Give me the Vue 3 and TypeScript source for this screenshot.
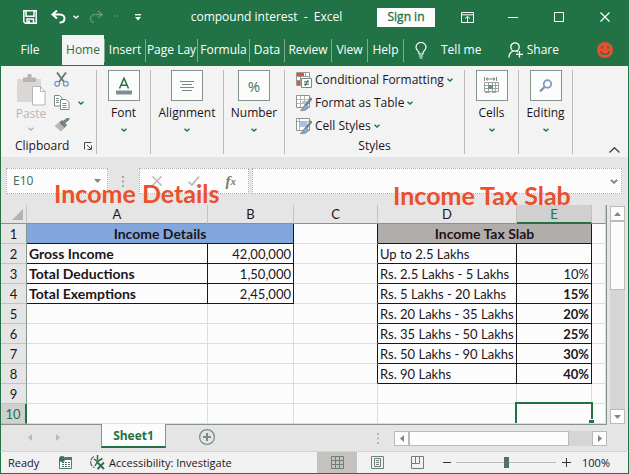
<script setup lang="ts">
import { ref } from 'vue'

interface Row {
  n: number
  label?: string
  amount?: string
  slab?: string
  rate?: string
}

const tabs = [
  { name: 'Insert', cls: 'w-insert' },
  { name: 'Page Lay', cls: 'w-page' },
  { name: 'Formula', cls: 'w-page' },
  { name: 'Data', cls: 'w-data' },
  { name: 'Review', cls: 'w-review' },
  { name: 'View', cls: 'w-view' },
  { name: 'Help', cls: 'w-view' },
]

const columns = ['A', 'B', 'C', 'D', 'E']

const rows: Row[] = [
  { n: 2, label: 'Gross Income', amount: '42,00,000', slab: 'Up to 2.5 Lakhs', rate: '' },
  { n: 3, label: 'Total Deductions', amount: '1,50,000', slab: 'Rs. 2.5 Lakhs - 5 Lakhs', rate: '10%' },
  { n: 4, label: 'Total Exemptions', amount: '2,45,000', slab: 'Rs. 5 Lakhs - 20 Lakhs', rate: '15%' },
  { n: 5, slab: 'Rs. 20 Lakhs - 35 Lakhs', rate: '20%' },
  { n: 6, slab: 'Rs. 35 Lakhs - 50 Lakhs', rate: '25%' },
  { n: 7, slab: 'Rs. 50 Lakhs - 90 Lakhs', rate: '30%' },
  { n: 8, slab: 'Rs. 90 Lakhs', rate: '40%' },
  { n: 9 },
  { n: 10 },
]

const cellName = ref('E10')
const formula = ref('')
const zoom = ref(50)
</script>

<template>
  <div class="window">
    <svg class="defs" aria-hidden="true">
      <symbol id="chev" viewBox="0 0 6 4"><path d="M0.5 0.7 L3 3 L5.5 0.7" fill="none" stroke="currentColor" stroke-width="1.4" /></symbol>
    </svg>

    <header class="titlebar">
      <button class="tb save" aria-label="Save">
        <svg width="14" height="14" viewBox="0 0 14 14"><path d="M0.8 0.8H13.2V13.2H2.2L0.8 11.8Z M3 1V6.2H11V1 M4 13V9H10.5V13" fill="none" stroke="#fff" stroke-width="1.5" /><path d="M5 10.5h2V13H5z" fill="#fff" /></svg>
      </button>
      <button class="tb save" aria-label="Undo">
        <svg width="15" height="14" viewBox="0 0 15 14"><path d="M6 0.5L1.5 4.5L6 8.5 M2 4.5H9C12.5 4.5 13.5 7 13.5 8.5C13.5 11 11.5 12.6 8.5 12.6" fill="none" stroke="#fff" stroke-width="2" /></svg>
      </button>
      <button class="tb tiny" aria-label="Undo list"><svg width="6" height="4"><use href="#chev" /></svg></button>
      <button class="tb redo" aria-label="Redo">
        <svg width="15" height="14" viewBox="0 0 15 14"><path d="M9 1L13 4.5L9 8 M13 4.5H6C3 4.5 1.5 6.5 1.5 8.5C1.5 11 3 12.4 5 12.4" fill="none" stroke="#7fa890" stroke-width="1.4" stroke-dasharray="1.4 0.8" /></svg>
      </button>
      <button class="tb tiny" aria-label="Redo list"><svg width="6" height="4" viewBox="0 0 6 4"><path d="M1 1h1M4 1h1" stroke="#8fb39e" /></svg></button>
      <button class="tb custom" aria-label="Customize toolbar">
        <svg width="6" height="7" viewBox="0 0 6 7"><path d="M0 0.7h6" stroke="#fff" stroke-width="1.3" /><path d="M0 3h6L3 6.5z" fill="#fff" /></svg>
      </button>
      <h1 class="doc">compound interest&nbsp; -&nbsp; Excel</h1>
      <button class="signin">Sign in</button>
      <div class="wincontrols">
        <button class="tb wc" aria-label="Ribbon display options">
          <svg width="13" height="11" viewBox="0 0 13 11"><path d="M0.5 0.5h12v10H0.5z M0.5 2.8h12 M6.5 10V4.5 M4 6.6L6.5 4.3L9 6.6" fill="none" stroke="#fff" /></svg>
        </button>
        <button class="tb wc" aria-label="Minimize"><svg width="10" height="1"><path d="M0 0.5h10" stroke="#fff" /></svg></button>
        <button class="tb wc" aria-label="Maximize"><svg width="10" height="10"><path d="M0.5 0.5h9v9h-9z" fill="none" stroke="#fff" /></svg></button>
        <button class="tb wc" aria-label="Close"><svg width="10" height="10"><path d="M0.5 0.5l9 9M9.5 0.5l-9 9" stroke="#fff" stroke-width="1.2" /></svg></button>
      </div>
    </header>

    <nav class="tabs">
      <button class="tab file">File</button>
      <button class="tab home">Home</button>
      <button v-for="t in tabs" :key="t.name" class="tab sep" :class="t.cls">{{ t.name }}</button>
      <button class="tab tell">
        <svg width="12" height="17" viewBox="0 0 12 17"><path d="M4 12V10.5C3.6 9 1 8 1 5.2A5 4.7 0 0 1 11 5.2C11 8 8.4 9 8 10.5V12z M4 14h4 M4.6 16h2.8" fill="none" stroke="#fff" stroke-width="1.2" /></svg>
        <span>Tell me</span>
      </button>
      <button class="tab share">
        <svg width="15" height="16" viewBox="0 0 15 16"><circle cx="7" cy="5" r="4.2" fill="none" stroke="#fff" stroke-width="1.3" /><path d="M1 15.5C1 12 3 10 5 9M8.5 9L9.8 10M11.5 9v6.6M8 12.3h7" fill="none" stroke="#fff" stroke-width="1.3" /></svg>
        <span>Share</span>
      </button>
      <button class="tab smile" aria-label="Feedback">
        <svg width="16" height="16" viewBox="0 0 16 16"><circle cx="8" cy="8" r="8" fill="#e9502f" /><path d="M5 4v2.6M11 4v2.6" stroke="#217346" stroke-width="1.6" /><path d="M3.5 9.2C5 13.2 11 13.2 12.5 9.2" fill="none" stroke="#217346" stroke-width="1.3" /></svg>
      </button>
    </nav>

    <section class="ribbon">
      <div class="group clipboard">
        <div class="cliprow">
          <button class="paste">
            <svg width="29" height="32" viewBox="0 0 29 32"><path d="M0 5h24v23H0z" fill="#d9d8d7" /><path d="M6 3.5h4.5V1.5a2 2 0 0 1 4 0V3.5H19V8H6z" fill="#b9b4b0" /><path d="M15.5 12.5H23.5L28 17.5V31H15.5z" fill="#fff" stroke="#b9b4b0" /><path d="M23.5 12.5V17.5H28" fill="none" stroke="#b9b4b0" /></svg>
            <span>Paste</span>
            <svg width="6" height="4"><use href="#chev" /></svg>
          </button>
          <div class="cliptools">
            <button class="plain" aria-label="Cut">
              <svg width="15" height="15" viewBox="0 0 15 15"><path d="M3 0.5L10 10M12 0.5L5 10" stroke="#6c7c76" stroke-width="2" /><circle cx="3.2" cy="11.8" r="2.4" fill="none" stroke="#6f98cf" stroke-width="1.3" /><circle cx="11.8" cy="11.8" r="2.4" fill="none" stroke="#6f98cf" stroke-width="1.3" /></svg>
            </button>
            <button class="plain" aria-label="Copy">
              <svg width="16" height="15" viewBox="0 0 16 15"><path d="M0.5 0.5h5l2.5 2.5v8H0.5z" fill="#fff" stroke="#7a8b84" /><path d="M6.5 4.5h5.5l3 3v7H6.5z" fill="#fff" stroke="#7a8b84" /><path d="M2 3.5h3M2 5.5h3M2 7.5h3M8.5 8.5h4M8.5 10.5h4M8.5 12.5h4" stroke="#7a8b84" /></svg>
              <svg class="green" width="6" height="4"><use href="#chev" /></svg>
            </button>
            <button class="plain" aria-label="Format painter">
              <svg width="16" height="14" viewBox="0 0 16 14"><path d="M0.5 8L5 4.5L10.5 10L7 13.5z" fill="#bcb6b2" /><path d="M5 4.5L8 2L13 7L10.5 10z" fill="#70857b" /><path d="M9.5 4.5L14 1" stroke="#70857b" stroke-width="3" stroke-linecap="round" /></svg>
            </button>
          </div>
        </div>
        <div class="grouplabel cliplabel">
          <span>Clipboard</span>
          <button class="plain launcher" aria-label="Clipboard settings"><svg width="8" height="8" viewBox="0 0 8 8"><path d="M0.5 7.5V0.5H7.5M3 3l4 4M7.5 3.5v4h-4" fill="none" stroke="#3d514a" /></svg></button>
        </div>
      </div>

      <div class="group g-font">
        <button class="big">
          <span class="box"><svg width="16" height="18" viewBox="0 0 16 18"><path d="M3.5 11.5L8 1.2L12.5 11.5M5 8.3h6" fill="none" stroke="#217346" stroke-width="1.5" /><path d="M0 13.5h16v4H0z" fill="#7d8f94" /></svg></span>
          <span>Font</span><svg width="6" height="4"><use href="#chev" /></svg>
        </button>
      </div>
      <div class="group g-align">
        <button class="big">
          <span class="box"><svg width="14" height="10" viewBox="0 0 14 10"><path d="M0 0.5h14M2 3.5h10M0 6.5h14M2 9.5h10" stroke="#7a8b84" /></svg></span>
          <span>Alignment</span><svg width="6" height="4"><use href="#chev" /></svg>
        </button>
      </div>
      <div class="group g-number">
        <button class="big">
          <span class="box pct">%</span>
          <span>Number</span><svg width="6" height="4"><use href="#chev" /></svg>
        </button>
      </div>

      <div class="group g-styles">
        <div class="stylelist">
          <button class="styleitem">
            <svg width="16" height="16" viewBox="0 0 16 16"><path d="M0.5 0.5h13v13H0.5z" fill="#fff" stroke="#9a9a9a" /><path d="M1 1h7v3H1zM1 9h3v4H1z" fill="#e9502f" /><path d="M1 4.5h12M1 8.5h5M9.5 1v4M4.5 4v9" stroke="#9a9a9a" /><path d="M5.5 6.5h10v9h-10z" fill="#fff" stroke="#7a8b84" /><path d="M8 9.8h5M8 12.2h5M12 8L9 14" stroke="#35684e" /></svg>
            Conditional Formatting <svg width="6" height="4"><use href="#chev" /></svg>
          </button>
          <button class="styleitem">
            <svg width="16" height="16" viewBox="0 0 16 16"><path d="M0.5 0.5h13v12H0.5z" fill="#fff" stroke="#8b9692" /><path d="M1 4.5h12M1 8.5h12M4.5 1v11M8.5 1v11" stroke="#b9b4b0" /><path d="M6 6h5v3H6z" fill="#a9c3e8" /><path d="M15.5 3L9.5 11" stroke="#718680" stroke-width="2.5" /><path d="M10 9.5L12.5 12C11.5 15 8 16 4.5 15.5C7 14 7 10.5 10 9.5z" fill="#86a6d2" stroke="#73878c" stroke-width="0.8" /></svg>
            Format as Table <svg width="6" height="4"><use href="#chev" /></svg>
          </button>
          <button class="styleitem">
            <svg width="16" height="16" viewBox="0 0 16 16"><path d="M0.5 0.5h13v12H0.5z" fill="#fff" stroke="#8b9692" /><path d="M1 3.5h12M3.5 1v11" stroke="#b9b4b0" /><path d="M4 4h7v5H4z" fill="#a9c3e8" /><path d="M15.5 3L9.5 11" stroke="#718680" stroke-width="2.5" /><path d="M10 9.5L12.5 12C11.5 15 8 16 4.5 15.5C7 14 7 10.5 10 9.5z" fill="#86a6d2" stroke="#73878c" stroke-width="0.8" /></svg>
            Cell Styles <svg width="6" height="4"><use href="#chev" /></svg>
          </button>
        </div>
        <div class="grouplabel">Styles</div>
      </div>

      <div class="group g-font">
        <button class="big">
          <span class="box"><svg width="16" height="17" viewBox="0 0 16 17"><path d="M0.5 0v4M12.5 0v4M2 2h9M4 0.5L2 2l2 1.5M9 0.5L11 2L9 3.5" fill="none" stroke="#7a8b84" /><path d="M0.5 5.5h14v9H0.5zM0.5 8.5h14M0.5 11.5h14M4.5 5.5v9M8.5 5.5v9M11.5 5.5v9M1 15.5h5M8 15.5h4" fill="none" stroke="#9aa39f" /><path d="M4 8h5v4H4z" fill="#748b8a" /></svg></span>
          <span>Cells</span><svg width="6" height="4"><use href="#chev" /></svg>
        </button>
      </div>
      <div class="group g-font">
        <button class="big">
          <span class="box"><svg width="14" height="14" viewBox="0 0 14 14"><circle cx="8.5" cy="5" r="3.8" fill="none" stroke="#7d9abb" stroke-width="1.7" /><path d="M5.5 8L1 12.3" stroke="#7d93aa" stroke-width="2.3" /></svg></span>
          <span>Editing</span><svg width="6" height="4"><use href="#chev" /></svg>
        </button>
      </div>
      <button class="plain collapse" aria-label="Collapse ribbon"><svg width="11" height="6" viewBox="0 0 11 6"><path d="M0.5 5.5L5.5 0.7L10.5 5.5" fill="none" stroke="#2c463a" stroke-width="1.2" /></svg></button>
    </section>

    <section class="formulabar">
      <div class="field namebox">
        <input v-model="cellName" aria-label="Name box" />
        <svg width="7" height="4" viewBox="0 0 7 4"><path d="M0 0h7L3.5 4z" fill="#7a8b84" /></svg>
      </div>
      <svg class="grip" width="2" height="11" viewBox="0 0 2 11"><path d="M0 0h2v2H0zM0 4.5h2v2H0zM0 9h2v2H0z" fill="#aaa5a1" /></svg>
      <div class="field fxbox">
        <button class="plain" aria-label="Cancel"><svg width="10" height="10"><path d="M0.5 0.5l9 9M9.5 0.5l-9 9" stroke="#bcb8b4" stroke-width="1.5" /></svg></button>
        <button class="plain" aria-label="Enter"><svg width="12" height="10" viewBox="0 0 12 10"><path d="M0.5 6L4 9L11 0.5" fill="none" stroke="#bcb8b4" stroke-width="1.7" /></svg></button>
        <button class="plain fx" aria-label="Insert function">f<small>x</small></button>
      </div>
      <div class="field formula">
        <input v-model="formula" aria-label="Formula" />
        <svg width="8" height="5" viewBox="0 0 6 4"><path d="M0.5 0.7L3 3L5.5 0.7" fill="none" stroke="#7a8b84" stroke-width="1.6" /></svg>
      </div>
      <strong class="note left">Income Details</strong>
      <strong class="note right">Income Tax Slab</strong>
    </section>

    <main class="work">
      <div class="sheet">
        <table class="grid">
          <colgroup>
            <col class="c-n" /><col class="c-a" /><col class="c-b" /><col class="c-c" /><col class="c-d" /><col class="c-e" /><col />
          </colgroup>
          <thead>
            <tr>
              <th class="corner"><svg width="11" height="11" viewBox="0 0 11 11"><path d="M11 0V11H0z" fill="#b5b1ae" /></svg></th>
              <th v-for="c in columns" :key="c" scope="col" :class="{ sel: c === 'E' }">{{ c }}</th>
              <th></th>
            </tr>
          </thead>
          <tbody>
            <tr>
              <th scope="row">1</th>
              <td colspan="2" class="k blue">Income Details</td>
              <td class="kr"></td>
              <td colspan="2" class="k tan">Income Tax Slab</td>
              <td></td>
            </tr>
            <tr v-for="r in rows" :key="r.n">
              <th scope="row" :class="{ sel: r.n === 10 }">{{ r.n }}</th>
              <td class="label" :class="{ k: r.label }">{{ r.label }}</td>
              <td class="num" :class="{ k: r.label }">{{ r.amount }}</td>
              <td :class="{ kr: r.slab }"></td>
              <td :class="{ k: r.slab }">{{ r.slab }}</td>
              <td class="num" :class="{ k: r.slab, heavy: r.n > 3, active: r.n === 10 }">{{ r.rate }}<i v-if="r.n === 10" class="cursor"></i></td>
              <td></td>
            </tr>
          </tbody>
        </table>
      </div>
      <div class="vscroll">
        <button class="sb" aria-label="Scroll up"><svg width="7" height="4" viewBox="0 0 7 4"><path d="M0 4h7L3.5 0z" fill="#7a8b84" /></svg></button>
        <div class="vthumb"></div>
        <div class="track"></div>
        <button class="sb" aria-label="Scroll down"><svg width="7" height="4" viewBox="0 0 7 4"><path d="M0 0h7L3.5 4z" fill="#7a8b84" /></svg></button>
      </div>
    </main>

    <section class="sheetbar">
      <div class="arrows">
        <button class="plain" aria-label="Previous sheet"><svg width="4" height="7" viewBox="0 0 4 7"><path d="M4 0v7L0 3.5z" fill="#bcb8b4" /></svg></button>
        <button class="plain" aria-label="Next sheet"><svg width="4" height="7" viewBox="0 0 4 7"><path d="M0 0v7L4 3.5z" fill="#bcb8b4" /></svg></button>
      </div>
      <button class="sheettab">Sheet1</button>
      <button class="plain add" aria-label="New sheet"><svg width="16" height="16" viewBox="0 0 16 16"><circle cx="8" cy="8" r="7.4" fill="none" stroke="#7a8b84" stroke-width="1.2" /><path d="M8 4v8M4 8h8" stroke="#7a8b84" stroke-width="2" /></svg></button>
      <div class="hwrap">
        <svg width="2" height="11" viewBox="0 0 2 11"><path d="M0 0h2v2H0zM0 4.5h2v2H0zM0 9h2v2H0z" fill="#bcb8b4" /></svg>
        <div class="hscroll">
          <button class="sb" aria-label="Scroll left"><svg width="4" height="7" viewBox="0 0 4 7"><path d="M4 0v7L0 3.5z" fill="#7a8b84" /></svg></button>
          <div class="hthumb"></div>
          <div class="track"></div>
          <button class="sb" aria-label="Scroll right"><svg width="4" height="7" viewBox="0 0 4 7"><path d="M0 0v7L4 3.5z" fill="#7a8b84" /></svg></button>
        </div>
      </div>
    </section>

    <footer class="status">
      <span class="ready">Ready</span>
      <svg class="macro" width="13" height="13" viewBox="0 0 13 13"><path d="M0.5 3v9.5h12V2H6" fill="#fff" stroke="#4f7c66" /><path d="M6 1h7v3H6z" fill="#4f7c66" /><circle cx="3" cy="3" r="3" fill="#3c7557" /><path d="M3 6.5h2M6 6.5h2M9 6.5h2M3 8.5h2M6 8.5h2M9 8.5h2M3 10.5h2M6 10.5h2M9 10.5h2" stroke="#4f7c66" /></svg>
      <button class="plain access">
        <svg width="16" height="15" viewBox="0 0 16 15"><path d="M5 1.5A6 6 0 0 0 5.5 12.5" fill="none" stroke="#4f7c66" stroke-width="1.3" stroke-dasharray="5 1" /><path d="M8.5 0v5M5 4L8.5 6.5L13.5 3.5M8.5 6.5L6 11" fill="none" stroke="#2f6a4b" stroke-width="1.5" /><path d="M8.5 7.5l6.5 6.5M15 7.5L8.5 14" stroke="#2f6a4b" stroke-width="1.8" /></svg>
        <span>Accessibility: Investigate</span>
      </button>
      <button class="view on" aria-label="Normal view"><svg width="13" height="13" viewBox="0 0 13 13"><path d="M0.5 0.5h12v12H0.5zM4.5 0v13M8.5 0v13M0 4.5h13M0 8.5h13" fill="none" stroke="#6e807a" /></svg></button>
      <button class="view" aria-label="Page layout view"><svg width="13" height="13" viewBox="0 0 13 13"><path d="M0.5 0.5h12v12H0.5zM3.5 2.5h6v8h-6zM5 4.5h3M5 6.5h3M5 8.5h3" fill="none" stroke="#6e807a" /></svg></button>
      <button class="view" aria-label="Page break view"><svg width="13" height="13" viewBox="0 0 13 13"><path d="M0.5 0.5h12v12H0.5zM4.5 0v7.5M0 7.5h8.5V0" fill="none" stroke="#6e807a" /></svg></button>
      <button class="plain zb" aria-label="Zoom out"><svg width="8" height="8"><path d="M0 3.5h8" stroke="#3a3438" /></svg></button>
      <input v-model="zoom" class="zoom" type="range" min="0" max="100" aria-label="Zoom" />
      <button class="plain zb" aria-label="Zoom in"><svg width="9" height="9"><path d="M0 4.5h9M4.5 0v9" stroke="#3a3438" /></svg></button>
      <span class="percent">100%</span>
    </footer>
  </div>
</template>

<style>
body {
  margin: 0;
  background: #fff;
}
</style>

<style scoped>
* {
  box-sizing: border-box;
}
.window {
  font-family: 'Open Sans', 'Noto Sans', sans-serif;
  font-size: 12px;
  line-height: 16px;
  color: #1d1519;
  background: #e5e5e5;
}
.defs {
  position: absolute;
  width: 0;
  height: 0;
}
svg {
  display: block;
  flex: none;
}
button {
  font: inherit;
  color: inherit;
  border: 0;
  padding: 0;
  margin: 0;
  background: none;
  display: flex;
  align-items: center;
  justify-content: center;
  white-space: nowrap;
}
input {
  font: inherit;
  border: 0;
  padding: 0;
  margin: 0;
  min-width: 0;
  background: transparent;
  outline: none;
}

.titlebar {
  display: flex;
  align-items: center;
  height: 35px;
  padding: 0 1px 1px 16px;
  background: #217346;
  color: #fff;
}
.save { width: 28px; height: 28px; }
.tiny { width: 8px; height: 28px; }
.redo { width: 32px; height: 28px; }
.custom { width: 36px; height: 28px; }
.doc {
  flex: 1;
  margin: 0;
  font-size: 12px;
  font-weight: 400;
  text-align: center;
  white-space: nowrap;
}
.signin {
  width: 58px;
  height: 19px;
  background: #fdfdfd;
  color: #217346;
  -webkit-text-stroke: 0.3px #217346;
}
.wincontrols {
  display: flex;
  margin-left: 9px;
}
.wc { width: 46px; height: 28px; }

.tabs {
  display: flex;
  align-items: center;
  height: 30px;
  background: #217346;
  color: #fff;
}
.tab { height: 23px; }
.file { width: 60px; }
.home {
  width: 42px;
  height: 30px;
  margin-left: 2px;
  color: #217346;
  background: #f4f4f4;
}
.sep { border-left: 1px solid #85a894; }
.w-insert { width: 41px; }
.w-page { width: 52px; }
.w-data { width: 35px; }
.w-review { width: 47px; }
.w-view { width: 36px; }
.tell {
  gap: 14px;
  padding-left: 11px;
  border-left: 1px solid #85a894;
}
.share {
  gap: 4px;
  margin-left: auto;
}
.smile {
  margin: 0 16px 0 38px;
}

.ribbon {
  display: flex;
  height: 92px;
  padding-top: 4px;
  background: #f3f3f3;
  border: solid #217346;
  border-width: 1px 1px 0;
}
.group {
  display: flex;
  flex-direction: column;
  height: 84px;
  border-right: 1px solid #bdb9b7;
}
.clipboard { width: 96px; justify-content: space-between; }
.g-font { width: 54px; }
.g-align { width: 73px; }
.g-number { width: 61px; }
.g-styles { width: 180px; justify-content: space-between; }
.cliprow {
  display: flex;
  padding: 2px 0 0 15px;
  gap: 8px;
}
.paste {
  flex-direction: column;
  justify-content: flex-start;
  color: #b9b4b0;
  width: 30px;
  padding-top: 2px;
}
.paste span {
  margin-bottom: 5px;
}
.cliptools {
  display: flex;
  flex-direction: column;
  gap: 8px;
}
.cliptools .plain {
  justify-content: flex-start;
  gap: 8px;
}
.green { color: #217346; }
.grouplabel {
  text-align: center;
  height: 16px;
}
.cliplabel {
  display: flex;
  align-items: center;
  justify-content: space-between;
  padding: 0 4px 0 14px;
}
.big {
  flex-direction: column;
  gap: 4px;
  width: 100%;
}
.big > svg,
.styleitem svg:last-child {
  color: #217346;
}
.big > svg { margin-top: 3px; }
.box {
  display: flex;
  align-items: center;
  justify-content: center;
  width: 32px;
  height: 31px;
  background: #fcfcfc;
  border: 1px solid #84948c;
}
.pct {
  color: #4f7262;
  font-size: 15px;
}
.stylelist {
  display: flex;
  flex-direction: column;
  align-items: flex-start;
  gap: 7px;
  padding: 2px 0 0 11px;
}
.styleitem {
  gap: 3px;
}
.collapse {
  align-self: flex-end;
  margin: 0 8px 4px auto;
}

.formulabar {
  position: relative;
  display: flex;
  align-items: center;
  padding: 11px 6px 11px 5px;
  height: 48px;
  border: solid #217346;
  border-width: 0 1px;
}
.field {
  display: flex;
  align-items: center;
  height: 26px;
  background: #fcfcfc;
  border: 1px dotted #b5b1ae;
}
.namebox {
  width: 102px;
  padding: 0 6px;
}
.namebox input {
  flex: 1;
  color: #41685a;
}
.grip { margin: 0 15px 0 14px; }
.fxbox {
  width: 110px;
  justify-content: space-between;
  padding: 0 12px;
}
.fx {
  font: italic bold 15px 'Liberation Serif', serif;
  color: #6f7f78;
}
.fx small { font-size: 11px; }
.formula {
  flex: 1;
  margin-left: 3px;
  padding: 0 3px;
}
.formula input { flex: 1; }
.note {
  position: absolute;
  z-index: 2;
  font: 700 25px/20px Lato, sans-serif;
  color: #e9502f;
  white-space: nowrap;
}
.left { left: 53px; top: 26px; }
.right { left: 392px; top: 28px; }

.work {
  display: flex;
  border: solid #217346;
  border-width: 0 1px;
}
.sheet {
  flex: 1;
  min-width: 0;
  overflow: hidden;
  border-right: 1px solid #84948c;
}
.grid {
  width: 100%;
  table-layout: fixed;
  border-collapse: separate;
  border-spacing: 0;
  font: 13px/18px Lato, sans-serif;
}
.c-n { width: 26px; }
.c-a { width: 181px; }
.c-b { width: 86px; }
.c-c { width: 84px; }
.c-d { width: 139px; }
.c-e { width: 75px; }
.grid th,
.grid td {
  height: 20px;
  padding: 1px 2px 0;
  border: solid #dcdcdc;
  border-width: 0 1px 1px 0;
  white-space: nowrap;
}
.grid td { background: #fcfcfc; }
.grid th {
  font-weight: 400;
  text-align: center;
  border-color: #c4c1bf;
}
.grid thead th {
  height: 19px;
  line-height: 14px;
  padding: 0 2px;
  border-bottom-color: #84948c;
}
.grid thead .corner svg { margin-left: 9px; }
.grid tbody th { border-right-color: #84948c; }
.grid thead th.sel {
  color: #217346;
  background: #d0d0d0;
  border-bottom: 2px solid #217346;
}
.grid tbody th.sel {
  color: #217346;
  background: #d0d0d0;
  border-right: 2px solid #217346;
}
.grid td.k { border-color: #1d1519; }
.grid td.kr { border-right-color: #1d1519; }
.grid td.blue,
.grid td.tan {
  text-align: center;
  font-size: 14px;
  font-weight: 700;
  background: #82a7dc;
}
.grid td.tan { background: #b1adaa; }
.grid td.label {
  font-size: 14px;
  font-weight: 700;
}
.grid td.num { text-align: right; }
.grid td.heavy { font-weight: 700; }
.grid td.active { position: relative; }
.cursor {
  position: absolute;
  inset: -2px -2px 0;
  border: solid #217346;
  border-width: 2px 2px 0;
}
.cursor::after {
  content: '';
  position: absolute;
  right: -3px;
  bottom: 0;
  width: 5px;
  height: 3px;
  background: #217346;
  border-top: 1px solid #fcfcfc;
}
.vscroll {
  display: flex;
  flex-direction: column;
  width: 15px;
  margin: 1px 3px 0;
}
.sb {
  flex: none;
  width: 15px;
  height: 15px;
  background: #fcfcfc;
  border: 1px solid #bdb9b6;
}
.vthumb {
  height: 69px;
  background: #fcfcfc;
  border: 1px solid #bdb9b6;
}
.track {
  flex: 1;
  background: #d6d5d4;
}

.sheetbar {
  display: flex;
  height: 28px;
  border: solid #217346;
  border-width: 0 1px;
  border-bottom: 1px dotted #c4c1bf;
}
.arrows,
.add {
  border-top: 1px solid #84948c;
}
.arrows {
  display: flex;
  align-items: center;
  gap: 24px;
  width: 100px;
  height: 27px;
  padding: 0 0 2px 27px;
}
.sheettab {
  width: 65px;
  height: 24px;
  padding-top: 2px;
  color: #217346;
  font-weight: 700;
  background: #fcfcfc;
  border: solid #84948c;
  border-width: 0 1px;
  border-bottom: 2px solid #217346;
}
.add {
  flex: 1;
  justify-content: flex-start;
  height: 27px;
  padding: 0 0 2px 33px;
}
.hwrap {
  display: flex;
  align-items: center;
  gap: 15px;
  border-top: 1px solid #84948c;
  margin-right: 21px;
}
.hscroll {
  display: flex;
  width: 213px;
}
.hthumb {
  width: 160px;
  background: #fcfcfc;
  border: 1px solid #bdb9b6;
}

.status {
  display: flex;
  align-items: center;
  height: 22px;
  padding-left: 7px;
  background: #f1f1f1;
  border: 1px solid #217346;
  border-top: 0;
  font-size: 11px;
}
.ready { width: 51px; }
.access {
  gap: 4px;
  margin: 0 auto 0 17px;
}
.view {
  width: 40px;
  height: 21px;
}
.on { background: #c5c1be; }
.zb { width: 10px; margin-left: 5px; }
.zoom {
  width: 100px;
  height: 12px;
  margin: 0 0 0 4px;
  appearance: none;
  background: linear-gradient(#bdb9b6, #bdb9b6) center / 100% 1px no-repeat;
}
.zoom::-webkit-slider-thumb {
  appearance: none;
  width: 5px;
  height: 11px;
  background: #4c7561;
}
.percent { margin: 0 18px 0 11px; }
</style>
